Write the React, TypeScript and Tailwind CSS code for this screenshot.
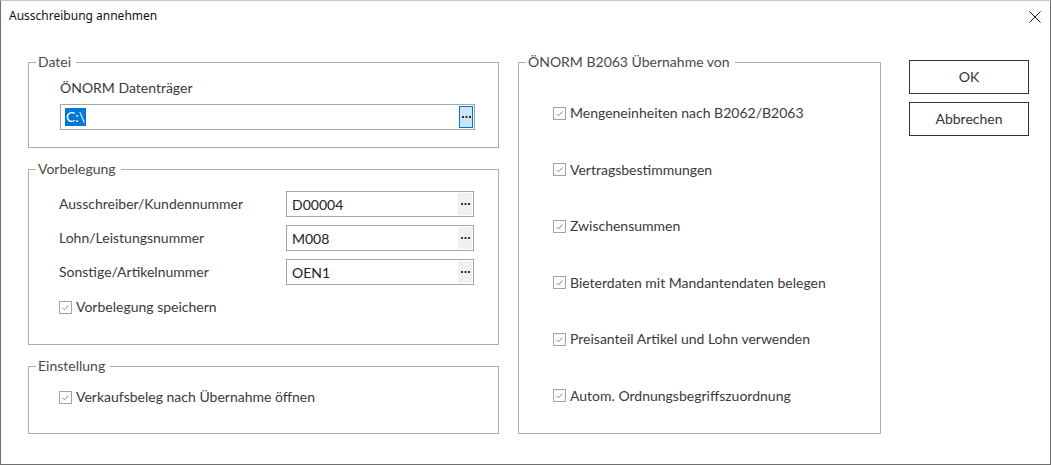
import React from "react";

const font = { fontFamily: "Lato, 'Noto Sans', sans-serif" };

function Check() {
  return (
    <svg width="13" height="13" viewBox="0 0 13 13" className="shrink-0">
      <rect x="0.5" y="0.5" width="12" height="12" fill="#ffffff" stroke="#a3a3a3" />
      <polyline points="3.5,6.8 5.5,8.8 9.5,4.5" fill="none" stroke="#8a8a8a" strokeWidth="1" />
    </svg>
  );
}

function CheckRow({ label }: { label: string }) {
  return (
    <div className="flex h-[20px] items-center">
      <Check />
      <span className="ml-[4px] text-[14px] leading-[20px] text-[#3a3a3a]">{label}</span>
    </div>
  );
}

function Dots() {
  return (
    <svg width="9" height="3" viewBox="0 0 9 3">
      <rect x="0" y="0" width="2" height="2" fill="#333" />
      <rect x="3.5" y="0" width="2" height="2" fill="#333" />
      <rect x="7" y="0" width="2" height="2" fill="#333" />
    </svg>
  );
}

function Group({
  title,
  className,
  children,
}: {
  title: string;
  className: string;
  children?: React.ReactNode;
}) {
  return (
    <div className={"relative border border-[#adadad] " + className}>
      <span className="absolute left-[7px] top-[-11px] bg-white pl-[2px] pr-[5px] text-[14px] leading-[20px] text-[#4a4a4a]">
        {title}
      </span>
      {children}
    </div>
  );
}

function Field({ value }: { value: string }) {
  return (
    <div className="flex h-[26px] w-[188px] items-stretch border border-[#a5a5a5] bg-white p-[1px]">
      <div className="flex flex-1 items-center pl-[4px] text-[14px] text-[#222]">{value}</div>
      <div className="flex w-[14px] items-center justify-center bg-[#f0f0f0]">
        <Dots />
      </div>
    </div>
  );
}

export default function App() {
  return (
    <div
      className="flex h-[465px] w-[1051px] flex-col border border-[#707070] border-t-[#c8c8c8] bg-white"
      style={font}
    >
      <div className="flex h-[30px] shrink-0 items-center justify-between pl-[8px] pr-[9px]">
        <span className="text-[12px] text-[#111]" style={{ fontFamily: "'Noto Sans', sans-serif" }}>
          Ausschreibung annehmen
        </span>
        <svg width="12" height="12" viewBox="0 0 12 12" className="mt-[1px]">
          <path d="M0.5 0.5 L11.5 11.5 M11.5 0.5 L0.5 11.5" stroke="#111" strokeWidth="1" />
        </svg>
      </div>
      <div className="flex flex-row pl-[27px]">
        <div className="flex w-[471px] flex-col pt-[31px]">
          <Group title="Datei" className="h-[86px] pl-[31px] pt-[15px]">
            <div className="text-[14px] leading-[20px] text-[#3a3a3a]">ÖNORM Datenträger</div>
            <div className="mt-[6px] flex h-[26px] w-[415px] items-stretch border border-[#a5a5a5] bg-white p-[1px]">
              <div className="flex flex-1 items-center pl-[3px]">
                <span className="bg-[#0078d7] px-[1px] text-[14px] leading-[18px] text-white">C:\</span>
              </div>
              <div className="flex w-[14px] items-center justify-center border border-[#0078d7] bg-[#cce4f7]">
                <Dots />
              </div>
            </div>
          </Group>
          <Group title="Vorbelegung" className="mt-[21px] h-[176px] pl-[30px] pt-[21px]">
            <div className="flex flex-col gap-[8px]">
              {[
                ["Ausschreiber/Kundennummer", "D00004"],
                ["Lohn/Leistungsnummer", "M008"],
                ["Sonstige/Artikelnummer", "OEN1"],
              ].map(([l, v]) => (
                <div key={l} className="flex items-center">
                  <span className="mt-[-2px] w-[227px] text-[14px] text-[#3a3a3a]">{l}</span>
                  <Field value={v} />
                </div>
              ))}
            </div>
            <div className="mt-[12px]">
              <CheckRow label="Vorbelegung speichern" />
            </div>
          </Group>
          <Group title="Einstellung" className="mt-[21px] h-[68px] pl-[30px] pt-[20px]">
            <CheckRow label="Verkaufsbeleg nach Übernahme öffnen" />
          </Group>
        </div>
        <div className="ml-[19px] pt-[31px]">
          <Group title="ÖNORM B2063 Übernahme von" className="h-[372px] w-[363px] pl-[34px] pt-[40px]">
            <div className="flex flex-col gap-[36.6px]">
              <CheckRow label="Mengeneinheiten nach B2062/B2063" />
              <CheckRow label="Vertragsbestimmungen" />
              <CheckRow label="Zwischensummen" />
              <CheckRow label="Bieterdaten mit Mandantendaten belegen" />
              <CheckRow label="Preisanteil Artikel und Lohn verwenden" />
              <CheckRow label="Autom. Ordnungsbegriffszuordnung" />
            </div>
          </Group>
        </div>
        <div className="ml-[28px] flex flex-col gap-[8px] pt-[29px]">
          <button className="h-[34px] w-[120px] border border-[#333] bg-white pb-[2px] text-[14px] text-[#333]">OK</button>
          <button className="h-[34px] w-[120px] border border-[#333] bg-white pb-[2px] text-[14px] text-[#333]">Abbrechen</button>
        </div>
      </div>
    </div>
  );
}
